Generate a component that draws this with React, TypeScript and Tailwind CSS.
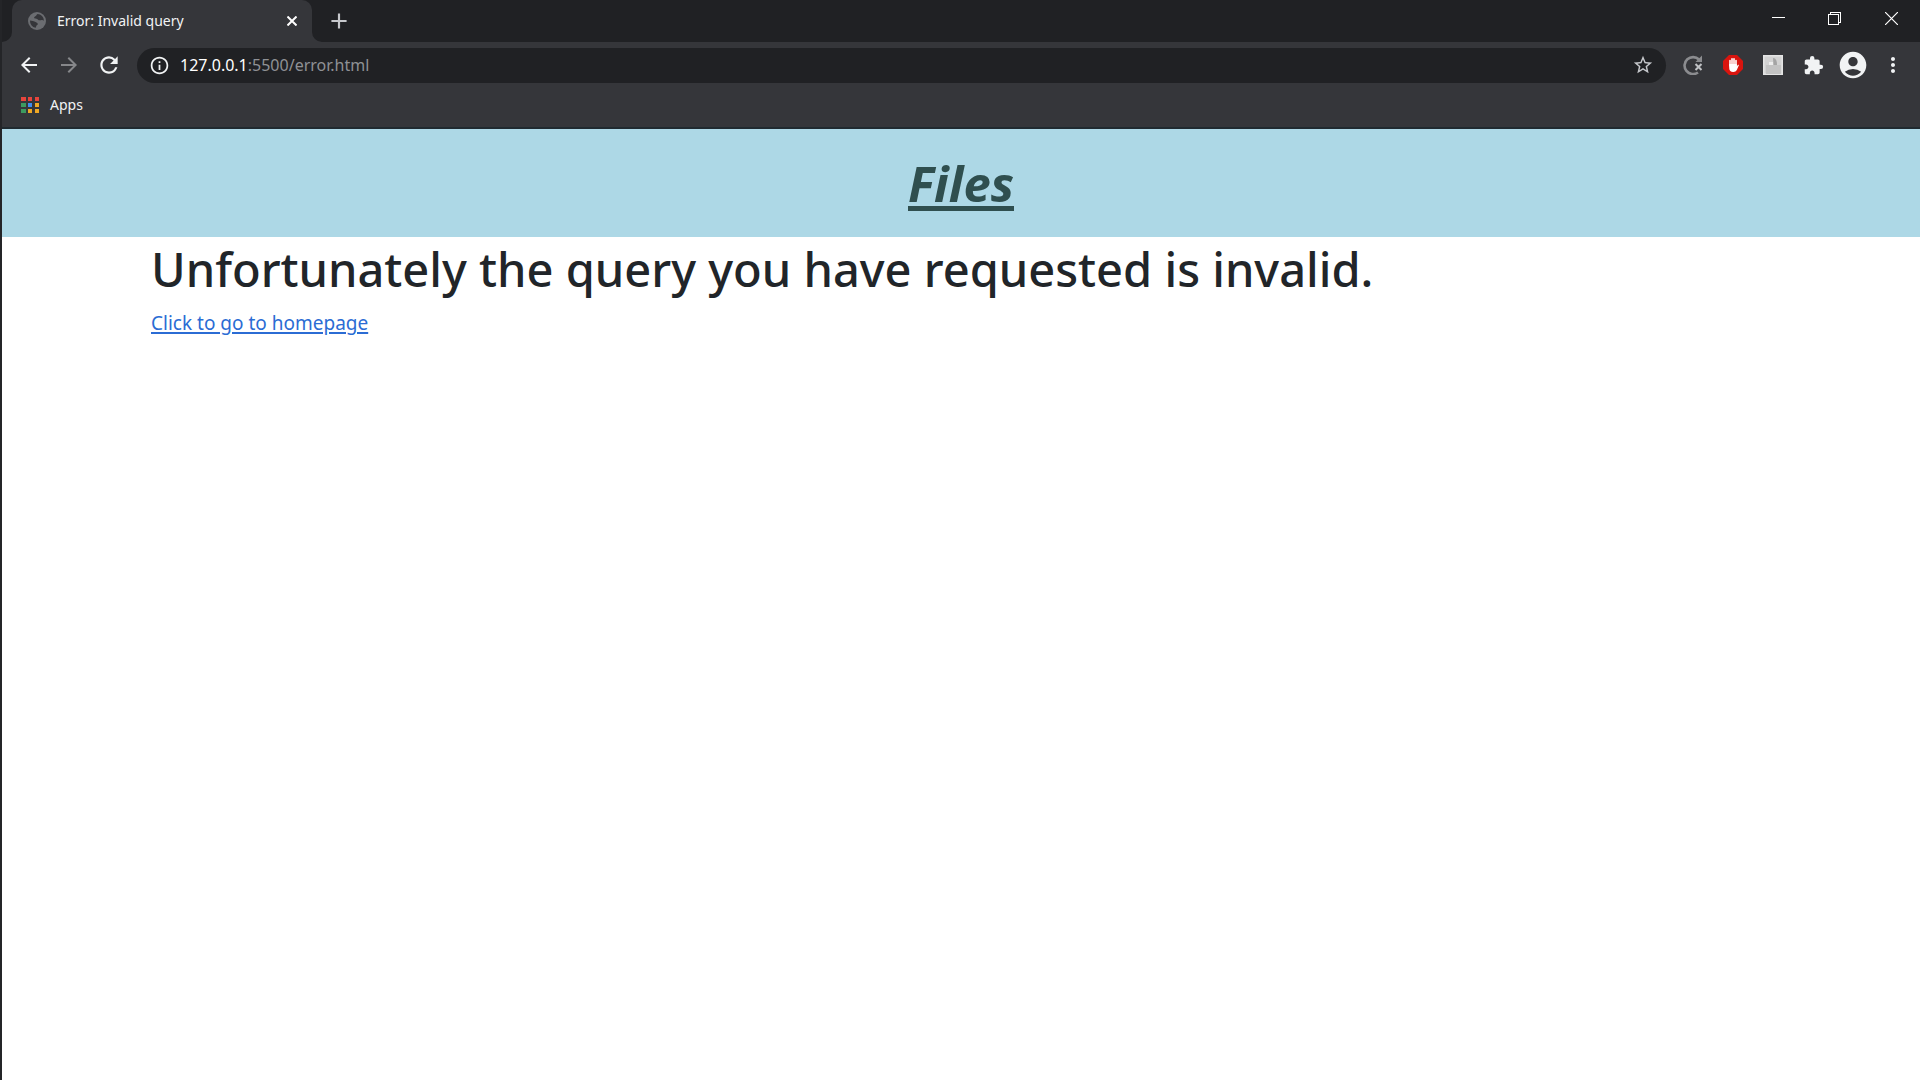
import type { ReactNode } from "react";
import {
  MdAccountCircle,
  MdAdd,
  MdArrowBack,
  MdArrowForward,
  MdExtension,
  MdInfoOutline,
  MdMoreVert,
  MdRefresh,
  MdStarBorder,
} from "react-icons/md";

function IconButton({ label, children, className = "" }: { label: string; children: ReactNode; className?: string }) {
  return (
    <button type="button" aria-label={label} className={`flex h-10 w-10 shrink-0 items-center justify-center ${className}`}>
      {children}
    </button>
  );
}

function GlobeIcon() {
  return (
    <svg aria-hidden="true" viewBox="0 0 18 18" className="size-[18px] shrink-0">
      <circle cx="9" cy="9" r="9" fill="#6b6d71" />
      <path d="M9.500 2c-1.500 1-1 2-2.500 2.500-1 .4-1.200 1.500-.2 2 1.200.4 2.200 0 3 1 .8 1 2 1 3.200.7 1.200-.4 2-.2 3 .5A7 7 0 0 0 9.500 2Z" fill="#35363a" />
      <path d="M2 8.500c2 .2 3.500.5 5 1.300 1.500.9 2.500 1 2.800 2 .2 1-1 1.300-1.500 2.200-.3.700-.2 1.300-.8 1.800A7 7 0 0 1 2 8.500Z" fill="#35363a" />
    </svg>
  );
}

function TabFlare({ className }: { className: string }) {
  return (
    <svg aria-hidden="true" viewBox="0 0 10 10" className={`h-[10px] w-[10px] shrink-0 self-end text-[#35363a] ${className}`}>
      <path d="M10 0v10H0A10 10 0 0 0 10 0Z" fill="currentColor" />
    </svg>
  );
}

function TabStrip() {
  return (
    <div className="flex h-[42px] bg-[#202124]">
      <TabFlare className="" />
      <div className="flex w-[300px] items-center rounded-t-[10px] bg-[#35363a] pl-4 pr-2">
        <GlobeIcon />
        <span className="ml-[11px] flex-1 whitespace-nowrap pb-px text-[14px] text-[#f1f3f4]">Error: Invalid query</span>
        <button type="button" aria-label="Close tab" className="flex size-6 items-center justify-center text-white">
          <svg viewBox="0 0 10 10" className="size-[10px]" stroke="currentColor" strokeWidth="2">
            <path d="M.5.5l9 9M9.500.5l-9 9" />
          </svg>
        </button>
      </div>
      <TabFlare className="-scale-x-100" />
      <button type="button" aria-label="New tab" className="flex w-[34px] items-center justify-center text-[#c6c8cc]">
        <MdAdd className="size-[26px]" />
      </button>
      <div className="ml-auto flex h-9 text-white">
        <button type="button" aria-label="Minimize" className="flex w-14 items-center justify-center">
          <svg viewBox="0 0 13 13" className="size-[13px]" stroke="currentColor" shapeRendering="crispEdges">
            <path d="M0 5.500h13" />
          </svg>
        </button>
        <button type="button" aria-label="Restore" className="flex w-14 items-center justify-center">
          <svg viewBox="0 0 13 13" className="size-[13px]" fill="none" stroke="currentColor" shapeRendering="crispEdges">
            <path d="M.5 2.500h10v10H.5zM2.500 2V.5h10v10H11" />
          </svg>
        </button>
        <button type="button" aria-label="Close window" className="flex w-[58px] items-center justify-center">
          <svg viewBox="0 0 13 13" className="size-[13px]" stroke="currentColor" strokeWidth="1.200">
            <path d="M0 0l13 13M13 0L0 13" />
          </svg>
        </button>
      </div>
    </div>
  );
}

function ReloadBlockedIcon() {
  return (
    <svg viewBox="0 0 20 20" className="size-5" fill="none" stroke="currentColor">
      <path d="M16 4.500A8.500 8.500 0 1 0 15 17.500" strokeWidth="2.600" />
      <path d="M19 .5v6.500h-6.500z" fill="currentColor" stroke="none" />
      <path d="M12.500 9l6 6M18.500 9l-6 6" stroke="#35363a" strokeWidth="4" />
      <path d="M12.500 9l6 6M18.500 9l-6 6" strokeWidth="2" stroke="#bfc1c4" />
    </svg>
  );
}

function StopHandIcon() {
  return (
    <svg viewBox="0 0 20 20" className="size-5">
      <path d="M6 0h8l6 6v8l-6 6H6l-6-6V6z" fill="#d9140e" />
      <path d="M7 11V5.500M9 10V3.700M11 10V3.700M13 11V5.500" stroke="#fff" strokeWidth="1.600" strokeLinecap="round" />
      <path d="M6.200 9h7.600v2.500l1-1.500c.6-.6 1.300-.2 1 .6L13.800 15c-.7 1.300-1.800 2-3.600 2-2.400 0-4-1.500-4-4z" fill="#fff" />
    </svg>
  );
}

function ThumbnailIcon() {
  return (
    <svg viewBox="0 0 20 20" className="size-5">
      <path d="M0 0h20v20H0z" fill="#e4e4e4" />
      <path d="M1.500 1.500h17v17h-17z" fill="#d2d2d2" />
      <path d="M3 10h15v9H3z" fill="#c3c3c3" />
      <path d="M6 7h4v3H6z" fill="#ececec" />
      <path d="M10 3c3 0 4 3 4 7h-3.500z" fill="#a4a4a4" />
    </svg>
  );
}

function Toolbar() {
  return (
    <div className="flex h-[46px] items-center px-[7px] text-[#f1f3f4]">
      <IconButton label="Back"><MdArrowBack className="size-6" /></IconButton>
      <IconButton label="Forward" className="text-[#86878a]"><MdArrowForward className="size-6" /></IconButton>
      <IconButton label="Reload"><MdRefresh className="size-[26px]" /></IconButton>
      <div className="ml-2 flex h-[35px] min-w-0 flex-1 items-center rounded-full bg-[#202124] pl-3">
        <MdInfoOutline className="size-[21px] shrink-0" />
        <div
          role="textbox"
          aria-label="Address"
          contentEditable
          suppressContentEditableWarning
          spellCheck={false}
          className="ml-2.5 flex-1 whitespace-nowrap text-[16px] text-[#8f9195] outline-none"
        >
          <span className="text-white">127.0.0.1</span>:5500/error.html
        </div>
        <button type="button" aria-label="Bookmark this page" className="mr-3 text-[#c6c8cc]">
          <MdStarBorder className="size-[22px]" />
        </button>
      </div>
      <div className="ml-[7px] flex">
        <IconButton label="Auto reload" className="text-[#8b8c8f]"><ReloadBlockedIcon /></IconButton>
        <IconButton label="Content blocker"><StopHandIcon /></IconButton>
        <IconButton label="Page thumbnail"><ThumbnailIcon /></IconButton>
        <IconButton label="Extensions"><MdExtension className="size-[21px]" /></IconButton>
        <IconButton label="Profile"><MdAccountCircle className="size-8" /></IconButton>
        <IconButton label="Menu"><MdMoreVert className="size-6" /></IconButton>
      </div>
    </div>
  );
}

function BookmarksBar() {
  return (
    <div className="flex h-[41px] items-start border-b-2 border-[#202a30] px-[19px] pt-[5px]">
      <button type="button" className="flex items-center gap-2.5 text-[14px] leading-6 text-[#f1f3f4]">
        <span className="grid grid-cols-3 gap-[2px]" aria-hidden="true">
          <span className="h-[4px] w-[5px] bg-[#e8453c]" />
          <span className="h-[4px] w-[4px] bg-[#e8453c]" />
          <span className="h-[4px] w-[4px] bg-[#e8453c]" />
          <span className="h-[4px] w-[5px] bg-[#3c9a5f]" />
          <span className="h-[4px] w-[4px] bg-[#3f8cf0]" />
          <span className="h-[4px] w-[4px] bg-[#f0a824]" />
          <span className="h-[4px] w-[5px] bg-[#3c9a5f]" />
          <span className="h-[4px] w-[4px] bg-[#f0a824]" />
          <span className="h-[4px] w-[4px] bg-[#f0a824]" />
        </span>
        Apps
      </button>
    </div>
  );
}

export default function App() {
  return (
    <div className="flex min-h-screen flex-col border-l-2 border-[#242528] bg-white font-['Noto_Sans','Open_Sans',sans-serif]">
      <div className="bg-[#35363a]">
        <TabStrip />
        <Toolbar />
        <BookmarksBar />
      </div>
      <header className="bg-[#add8e6] py-6 text-center text-[49px] font-bold italic leading-[60px] text-[#2f4f4f]">
        <h1>
          <a href="#" className="underline decoration-[5px] underline-offset-[4px]">Files</a>
        </h1>
      </header>
      <main className="mx-auto w-full max-w-[1650px] px-[15px] pt-0.5">
        <h2 className="text-[47px] font-medium leading-[60px] text-[#212529]">
          Unfortunately the query you have requested is invalid.
        </h2>
        <a href="#" className="mt-2 inline-block text-[19px] leading-[32px] text-[#2b6cd4] underline decoration-2 underline-offset-2">
          Click to go to homepage
        </a>
      </main>
    </div>
  );
}
